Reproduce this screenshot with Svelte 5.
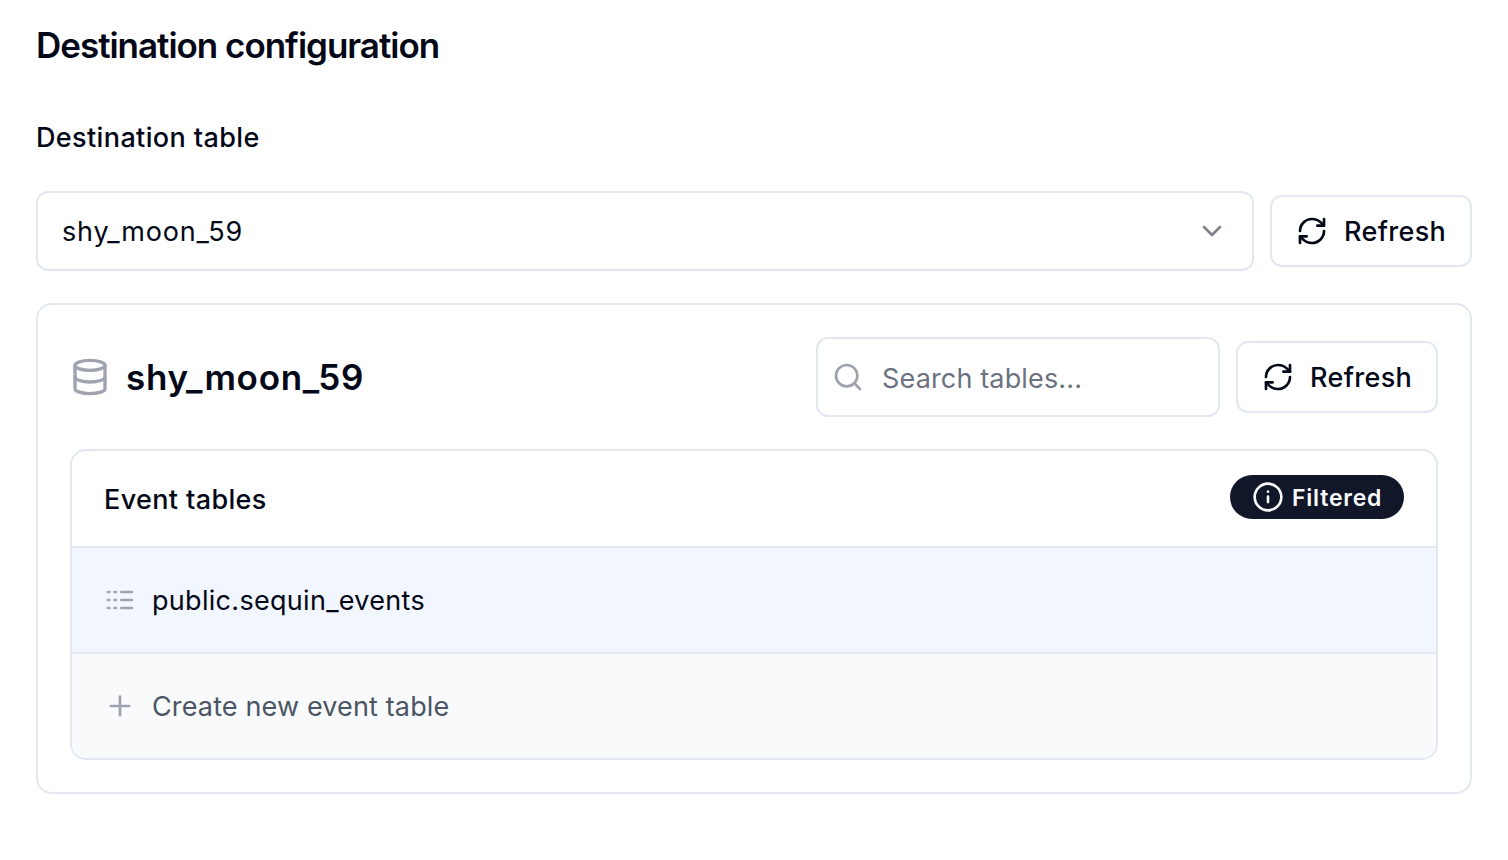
<script>
  const selected = 'shy_moon_59';
</script>

{#snippet refreshIcon()}
  <svg class="icon" viewBox="0 0 24 24">
    <path d="M3 12a9 9 0 0 1 9-9 9.75 9.75 0 0 1 6.74 2.74L21 8" />
    <path d="M21 3v5h-5" />
    <path d="M21 12a9 9 0 0 1-9 9 9.75 9.75 0 0 1-6.74-2.74L3 16" />
    <path d="M8 16H3v5" />
  </svg>
{/snippet}

<main>
  <h2>Destination configuration</h2>
  <div class="label">Destination table</div>

  <div class="picker">
    <div class="select">
      <span class="t-select">{selected}</span>
      <svg class="icon chevron" viewBox="0 0 24 24"><path d="m6 9 6 6 6-6" /></svg>
    </div>
    <button>{@render refreshIcon()}<span class="t-refresh">Refresh</span></button>
  </div>

  <section class="card">
    <header>
      <svg class="icon db" viewBox="0 0 24 24">
        <ellipse cx="12" cy="5" rx="9" ry="3" />
        <path d="M3 5v14a9 3 0 0 0 18 0V5" />
        <path d="M3 12a9 3 0 0 0 18 0" />
      </svg>
      <h3>{selected}</h3>
      <div class="search">
        <svg class="icon" viewBox="0 0 24 24"><circle cx="11" cy="11" r="8" /><path d="m21 21-4.3-4.3" /></svg>
        <span class="t-search">Search tables...</span>
      </div>
      <button>{@render refreshIcon()}<span class="t-refresh">Refresh</span></button>
    </header>

    <div class="tables">
      <div class="head">
        <span class="t-head">Event tables</span>
        <div class="badge">
          <svg class="icon" viewBox="0 0 24 24">
            <circle cx="12" cy="12" r="10" />
            <path d="M12 15.8v-4.1M12 8h.01" />
          </svg>
          <span class="t-badge">Filtered</span>
        </div>
      </div>
      <div class="row active">
        <svg class="icon" viewBox="0 0 24 24">
          <path d="M3 6h1M7.9 6H9M13 6h8M3 12h1M7.9 12H9M13 12h8M3 18h1M7.9 18H9M13 18h8" />
        </svg>
        <span class="t-row">public.sequin_events</span>
      </div>
      <div class="row create">
        <svg class="icon" viewBox="0 0 24 24"><path d="M5 12h14M12 5v14" /></svg>
        <span class="t-create">Create new event table</span>
      </div>
    </div>
  </section>
</main>

<style>
  :global(body) { margin: 0; background: #fff; }
  main {
    box-sizing: border-box;
    width: 1508px;
    height: 860px;
    padding: 17px 36px 0;
    font-family: Inter, "Liberation Sans", sans-serif;
    font-size: 27px;
    line-height: 40px;
    color: #020817;
    white-space: nowrap;
  }
  main * { box-sizing: border-box; }
  h2, h3 { margin: 0; font-size: 35px; font-weight: 600; line-height: 56px; }
  h2 { letter-spacing: -1.02px; }
  h3 { flex: 1; padding-bottom: 1px; letter-spacing: .72px; }
  .label { margin-top: 45px; font-weight: 500; letter-spacing: .38px; }
  .picker { display: flex; align-items: center; gap: 16px; margin-top: 33px; }
  .select, .search {
    display: flex;
    align-items: center;
    height: 80px;
    border: 2px solid #e2e7f1;
    border-radius: 12px;
  }
  .select { flex: 1; justify-content: space-between; padding: 0 24px; }
  button {
    display: flex;
    align-items: center;
    gap: 16px;
    width: 202px;
    height: 72px;
    padding: 0 24px;
    border: 2px solid #e2e7f1;
    border-radius: 12px;
    background: #fff;
    color: inherit;
    font: inherit;
    font-weight: 500;
  }
  .icon {
    flex: none;
    display: block;
    width: 32px;
    height: 32px;
    fill: none;
    stroke: currentColor;
    stroke-width: 2;
    stroke-linecap: round;
    stroke-linejoin: round;
  }
  .chevron { opacity: .5; }
  .card {
    height: 491px;
    margin-top: 32px;
    padding: 32px;
    border: 2px solid #e2e7f1;
    border-radius: 16px;
  }
  header { display: flex; align-items: center; height: 80px; }
  .db { width: 40px; height: 40px; margin-right: 16px; }
  .db, .search .icon, .row .icon { color: #9fa3af; }
  .search { gap: 18px; width: 404px; margin-right: 16px; padding-left: 14px; color: #6b7280; }
  .tables {
    height: 311px;
    margin-top: 32px;
    border: 2px solid #e2e7f0;
    border-radius: 16px;
    overflow: hidden;
  }
  .head {
    display: flex;
    align-items: center;
    justify-content: space-between;
    height: 97px;
    padding: 0 32px;
    border-bottom: 2px solid #e2e7f0;
    font-weight: 500;
  }
  .badge {
    display: flex;
    align-items: center;
    gap: 8px;
    width: 174px;
    height: 44px;
    margin-bottom: 3px;
    padding-left: 22px;
    border-radius: 22px;
    background: #111628;
    color: #f8fafc;
    font-size: 23px;
    font-weight: 600;
    line-height: 32px;
  }
  .row { display: flex; align-items: center; gap: 16px; height: 106px; padding: 0 32px; }
  .active { border-bottom: 2px solid #e2e7f0; background: #f2f6ff; }
  .create { height: 104px; background: #f9fafc; color: #4b5563; }
  .t-select { padding-top: 1px; letter-spacing: .8px; }
  .t-refresh { padding-top: 1px; letter-spacing: .33px; }
  .t-search { padding-top: 3px; letter-spacing: .15px; }
  .t-head { padding-top: 3px; letter-spacing: .37px; }
  .t-badge { padding-top: 2px; letter-spacing: .78px; }
  .t-row { padding-top: 1px; letter-spacing: .3px; }
  .t-create { padding-top: 1px; letter-spacing: .14px; }
</style>
